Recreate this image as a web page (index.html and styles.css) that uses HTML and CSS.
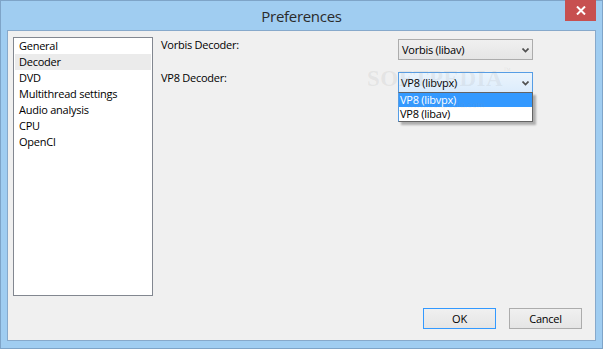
FILE: index.html
```html
<!DOCTYPE html>
<html>
<head>
<meta charset="utf-8">
<link rel="stylesheet" href="styles.css">
</head>
<body>
<div class="window">
  <div class="titlebar">
    <div class="title">Preferences</div>
    <div class="close">
      <svg width="10" height="9" viewBox="0 0 10 9"><path d="M1 0.5 L9 8.5 M9 0.5 L1 8.5" stroke="#fff" stroke-width="2"/></svg>
    </div>
  </div>
  <div class="client">
    <div class="main">
      <ul class="nav">
        <li>General</li>
        <li class="hover">Decoder</li>
        <li>DVD</li>
        <li>Multithread settings</li>
        <li>Audio analysis</li>
        <li>CPU</li>
        <li>OpenCl</li>
      </ul>
      <div class="panel">
        <div class="label">Vorbis Decoder:</div>
        <div class="combo"><span>Vorbis (libav)</span><svg class="arrow" width="7" height="5" viewBox="0 0 7 5"><path d="M0.5 0.5 L3.5 3.5 L6.5 0.5" fill="none" stroke="#505050" stroke-width="1.7"/></svg></div>
        <div class="label">VP8 Decoder:</div>
        <div class="combo-wrap">
          <div class="combo focused"><span>VP8 (libvpx)</span><svg class="arrow" width="7" height="5" viewBox="0 0 7 5"><path d="M0.5 0.5 L3.5 3.5 L6.5 0.5" fill="none" stroke="#505050" stroke-width="1.7"/></svg></div>
          <ul class="dropdown">
            <li class="sel">VP8 (libvpx)</li>
            <li>VP8 (libav)</li>
          </ul>
        </div>
      </div>
    </div>
    <div class="buttons">
      <button class="btn default">OK</button>
      <button class="btn">Cancel</button>
    </div>
    <div class="watermark">SOFTPEDIA<span class="tm">™</span><span class="url">www.softpedia.com</span></div>
  </div>
</div>
</body>
</html>
```
FILE: styles.css
```css
* { box-sizing: border-box; }
html, body { margin: 0; padding: 0; }
body {
  width: 603px;
  height: 349px;
  overflow: hidden;
  font-family: "Open Sans", "Noto Sans", sans-serif;
  font-size: 11px;
  letter-spacing: -0.25px;
  color: #000;
}
.window {
  width: 603px;
  height: 349px;
  border: 1px solid #7ea4c8;
  background: #a0cdf1;
  padding: 0 6px 7px 6px;
  display: flex;
  flex-direction: column;
}
.titlebar {
  height: 29px;
  position: relative;
  display: flex;
  justify-content: center;
}
.title {
  font-size: 15px;
  line-height: 20px;
  margin-top: 5px;
  letter-spacing: -0.3px;
  color: #2b2b2b;
}
.close {
  position: absolute;
  top: -1px;
  right: 0;
  width: 31px;
  height: 21px;
  background: #c75050;
  display: flex;
  align-items: center;
  justify-content: center;
}
.client {
  position: relative;
  height: 311px;
  border: 1px solid #87a9cb;
  background: #f0f0f0;
  padding: 6px 13px 11px 5px;
  display: flex;
  flex-direction: column;
}
.main {
  display: flex;
  height: 259px;
}
.nav {
  list-style: none;
  margin: 0;
  width: 140px;
  height: 259px;
  border: 1px solid #828790;
  background: #fff;
  padding: 0 1px;
}
.nav li {
  height: 16px;
  line-height: 16px;
  padding-left: 4px;
}
.nav li.hover { background: #ebebeb; }
.panel {
  padding: 2px 0 0 8px;
  display: grid;
  grid-template-columns: 237px 135px;
  grid-auto-rows: 21px;
  row-gap: 12px;
  align-content: start;
}
.label {
  line-height: 16px;
  margin-top: -2px;
}
.combo-wrap { position: relative; }
.combo {
  height: 21px;
  border: 1px solid #acacac;
  background: linear-gradient(#f0f0f0, #e5e5e5);
  display: flex;
  align-items: center;
  justify-content: space-between;
  padding: 0 3px 0 3px;
  line-height: 16px;
}
.combo.focused {
  border-color: #569de5;
  background: linear-gradient(#ebf4fc, #dcecfc);
  padding-left: 2px;
}
.arrow { margin-top: 1px; }
.dropdown {
  position: absolute;
  top: 20px;
  left: 0;
  width: 135px;
  margin: 0;
  padding: 0;
  list-style: none;
  border: 1px solid #646464;
  border-left-color: #569de5;
  background: #fff;
  box-shadow: 3px 3px 2px rgba(0, 0, 0, 0.28);
}
.dropdown li {
  height: 14px;
  line-height: 14px;
  padding-left: 1px;
}
.dropdown li.sel {
  background: #3399ff;
  color: #fff;
}
.buttons {
  margin-top: 12px;
  display: flex;
  justify-content: flex-end;
  gap: 13px;
}
.btn {
  width: 73px;
  height: 21px;
  font-family: inherit;
  font-size: 11px;
  letter-spacing: -0.25px;
  color: #000;
  border: 1px solid #acacac;
  background: linear-gradient(#f0f0f0, #e5e5e5);
  padding: 0;
}
.btn.default { border-color: #3399ff; }
.watermark {
  position: absolute;
  left: 359px;
  top: 35px;
  font-family: "Liberation Serif", serif;
  font-weight: bold;
  font-size: 23px;
  letter-spacing: 0.5px;
  color: rgba(150, 150, 150, 0.14);
  pointer-events: none;
  white-space: nowrap;
}
.watermark .tm { font-size: 8px; font-weight: normal; vertical-align: top; }
.watermark .url {
  position: absolute;
  left: 40px;
  top: 34px;
  font-size: 9px;
  font-weight: normal;
  font-family: "Liberation Sans", sans-serif;
  letter-spacing: 0;
  color: rgba(150, 150, 150, 0.12);
}
```
